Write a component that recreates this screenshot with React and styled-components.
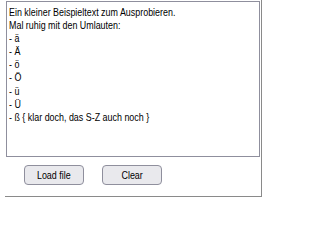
import styled, { createGlobalStyle } from "styled-components"

const GlobalStyle = createGlobalStyle`
  body {
    margin: 0;
    background: #ffffff;
    font-family: "Liberation Sans", Arial, sans-serif;
  }
`

// the reference text is a narrow Arial; squeeze the glyphs horizontally
const SQUEEZE = 0.81

const sample = `Ein kleiner Beispieltext zum Ausprobieren.
Mal ruhig mit den Umlauten:
- ä
- Ä
- ö
- Ö
- ü
- Ü
- ß { klar doch, das S-Z auch noch }`

export default function App() {
  return (
    <>
      <GlobalStyle />
      <Panel>
        <Frame>
          <Editor defaultValue={sample} spellCheck={false} />
        </Frame>
        <Buttons>
          <Button type="button"><Label>Load file</Label></Button>
          <Button type="button"><Label>Clear</Label></Button>
        </Buttons>
      </Panel>
    </>
  )
}

const Panel = styled.div`
  width: 255px;
  height: 195px;
  margin-left: 5px;
  padding: 1px 0 0 1px;
  border-right: 1px solid #8a8a8a;
  border-bottom: 1px solid #8a8a8a;
`

const Frame = styled.div`
  box-sizing: border-box;
  width: 254px;
  height: 156px;
  border: 1px solid #8f8f9d;
  overflow: hidden;
`

const Editor = styled.textarea`
  display: block;
  box-sizing: border-box;
  width: ${252 / SQUEEZE}px;
  height: 154px;
  margin: 0;
  padding: 4px ${2 / SQUEEZE}px;
  border: none;
  resize: none;
  outline: none;
  transform: scaleX(${SQUEEZE});
  transform-origin: left top;
  font-family: "Liberation Sans", Arial, sans-serif;
  font-size: 11px;
  line-height: 13.1px;
  color: #000000;
  background: #ffffff;
  overflow: hidden;
`

const Buttons = styled.div`
  display: flex;
  gap: 18px;
  padding: 8px 0 0 18px;
`

const Button = styled.button`
  box-sizing: border-box;
  display: flex;
  align-items: center;
  justify-content: center;
  width: 60px;
  height: 20px;
  padding: 0;
  background: #e9e9ed;
  border: 1px solid #8f8f9d;
  border-radius: 4px;
  font-family: "Liberation Sans", Arial, sans-serif;
  font-size: 11px;
  color: #000000;
`

const Label = styled.span`
  display: inline-block;
  white-space: nowrap;
  transform: scaleX(${SQUEEZE});
`
